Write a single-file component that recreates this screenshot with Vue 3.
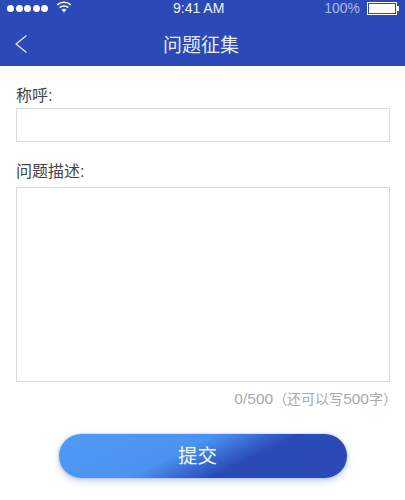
<script setup>
const maxLength = 500
const used = 0
</script>

<template>
  <div class="page">
    <header class="head">
      <div class="status">
        <div class="status-left">
          <span class="dots"><i v-for="n in 5" :key="n"></i></span>
          <svg class="wifi" width="16" height="12" viewBox="0 0 16 12">
            <path d="M8 11.5 L5.6 8.7 A3.6 3.6 0 0 1 10.4 8.7 Z" fill="#fff" />
            <path d="M3.7 6.6 A6.4 6.4 0 0 1 12.3 6.6" fill="none" stroke="#fff" stroke-width="1.5" />
            <path d="M1.3 3.9 A9.8 9.8 0 0 1 14.7 3.9" fill="none" stroke="#fff" stroke-width="1.5" />
          </svg>
        </div>
        <span class="time">9:41 AM</span>
        <div class="status-right">
          <span class="percent">100%</span>
          <span class="battery"><span class="battery-fill"></span></span>
          <span class="battery-tip"></span>
        </div>
      </div>
      <div class="nav">
        <svg class="back" width="14" height="20" viewBox="0 0 14 20">
          <path d="M12.5 1.5 L2 10 L12.5 18.5" fill="none" stroke="#e6ebf8" stroke-width="1.2" />
        </svg>
        <h1 class="title">问题征集</h1>
      </div>
    </header>

    <main class="form">
      <label class="label first">称呼:</label>
      <input class="name-input" type="text" />
      <label class="label second">问题描述:</label>
      <textarea class="desc-input"></textarea>
      <p class="counter">
        <span class="num">{{ used }}/{{ maxLength }}</span>（还可以写<span class="num">{{ maxLength - used }}</span>字）
      </p>
      <button class="submit" type="button">提交</button>
    </main>
  </div>
</template>

<style scoped>
.page {
  width: 405px;
  height: 500px;
  overflow: hidden;
  background: #fff;
  font-family: "Liberation Sans", "Noto Sans CJK SC", sans-serif;
}

.head {
  height: 66px;
  background: #2c4ab7;
  color: #fff;
}

.status {
  height: 14px;
  display: grid;
  grid-template-columns: 166px auto 1fr;
  align-items: center;
  padding: 0 6px 0 7px;
}

.status-left {
  display: flex;
  align-items: center;
  gap: 8px;
}

.dots {
  display: flex;
  gap: 1.5px;
}

.dots i {
  width: 7px;
  height: 7px;
  border-radius: 50%;
  background: #fff;
}

.wifi {
  margin-top: -2px;
}

.time {
  font-size: 14px;
  color: #f0f3fb;
}

.status-right {
  display: flex;
  align-items: center;
  justify-content: flex-end;
}

.percent {
  font-size: 14px;
  color: #aab8e4;
  margin-right: 7px;
}

.battery {
  width: 30px;
  height: 13px;
  border: 1px solid #fff;
  padding: 1px;
  box-sizing: border-box;
  display: block;
}

.battery-fill {
  display: block;
  height: 100%;
  background: #fff;
}

.battery-tip {
  width: 2px;
  height: 5px;
  background: #fff;
}

.nav {
  height: 52px;
  box-sizing: border-box;
  padding: 6px 3px 0 0;
  display: flex;
  align-items: center;
  justify-content: center;
  position: relative;
}

.back {
  position: absolute;
  left: 14px;
  top: 20px;
}

.title {
  margin: 0;
  font-size: 19px;
  font-weight: 400;
  color: #e6ebf8;
}

.form {
  display: flex;
  flex-direction: column;
  padding: 0 15px 0 16px;
}

.label {
  font-size: 16px;
  color: #444;
  line-height: 22px;
}

.label.first {
  margin-top: 19px;
}

.label.second {
  margin-top: 19px;
}

.name-input,
.desc-input {
  display: block;
  box-sizing: border-box;
  width: 374px;
  border: 1px solid #d9d9de;
  background: #fff;
  padding: 0;
  margin: 0;
  outline: none;
  resize: none;
}

.name-input {
  height: 34px;
  margin-top: 1px;
}

.desc-input {
  height: 195px;
  margin-top: 4px;
}

.counter {
  margin: 7px -7px 0 0;
  text-align: right;
  font-size: 14px;
  line-height: 20px;
  color: #a9a9ad;
}

.num {
  font-size: 15.5px;
}

.submit {
  display: block;
  width: 288px;
  height: 44px;
  margin: 25px 0 0 43px;
  border: none;
  border-radius: 22px;
  background: linear-gradient(154deg, #4f9bf5 0%, #4a93f0 42%, #2a4ab5 64%, #2c4ab7 100%);
  box-shadow: 0 0 2px rgba(80, 130, 230, 0.6), 0 3px 7px rgba(60, 90, 170, 0.3);
  color: #f2f5fc;
  font-family: inherit;
  font-size: 19.5px;
  padding: 0 11px 4px 0;
}
</style>
